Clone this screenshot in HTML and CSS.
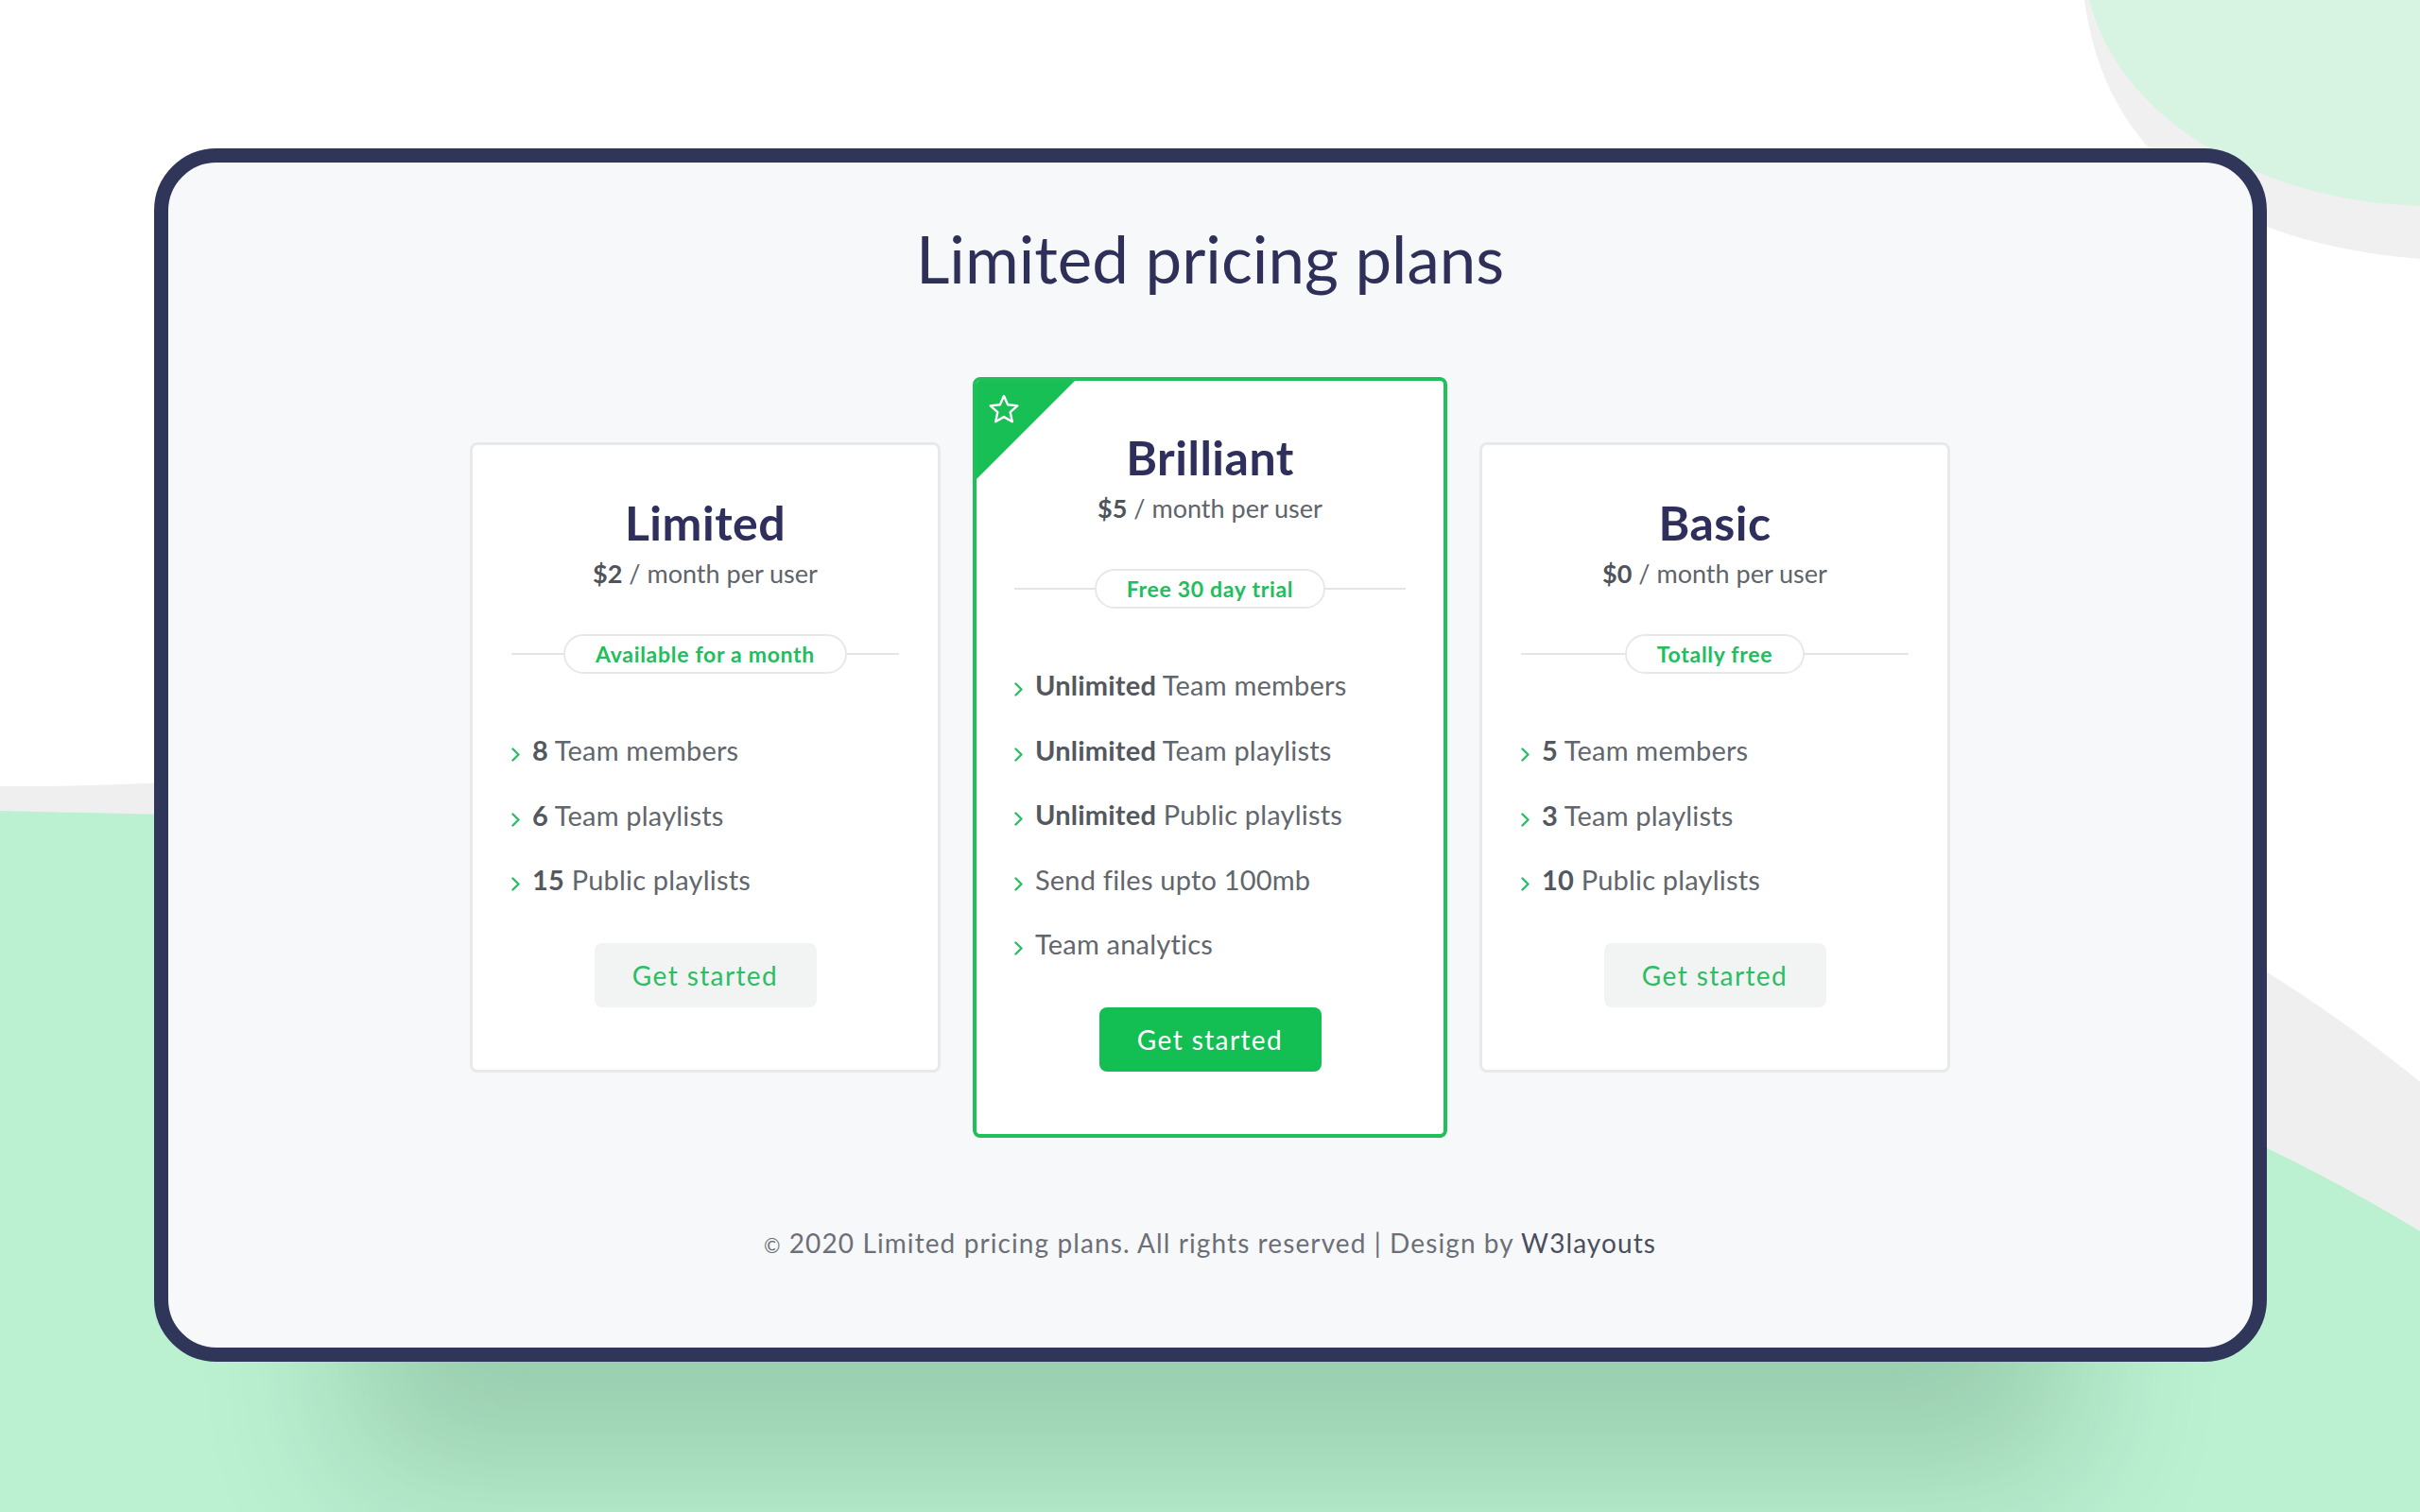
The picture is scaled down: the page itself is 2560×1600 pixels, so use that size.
FILE: index.html
```html
<!DOCTYPE html>
<html lang="en">
<head>
  <meta charset="UTF-8" />
  <meta name="viewport" content="width=device-width, initial-scale=1" />
  <title>Limited pricing plans</title>
  <link rel="stylesheet" href="styles.css">
</head>
<body>

  <!-- background blobs -->
  <svg class="decor" viewBox="0 0 2560 1600" preserveAspectRatio="none" aria-hidden="true">
    <path d="M2205 0 C2225 150 2330 255 2560 274 L2560 0 Z" fill="#f0f0f0" />
    <path d="M2210 0 C2240 120 2380 212 2560 218 L2560 0 Z" fill="#d7f4e3" />
    <path d="M0 832 C700 838 1800 520 2560 1145 L2560 1600 L0 1600 Z" fill="#efefef" />
    <path d="M0 858 C700 875 1850 870 2560 1303 L2560 1600 L0 1600 Z" fill="#bbf0d1" />
  </svg>

  <main class="frame">
    <h1 class="page-title">Limited pricing plans</h1>

    <section class="plans">
      <article class="plan">
        <h3 class="plan-name">Limited</h3>
        <p class="plan-price"><b>$2</b> / month per user</p>
        <div class="plan-tag"><span>Available for a month</span></div>
        <ul class="plan-features">
          <li><svg class="chev" viewBox="0 0 10 15"><path d="M1.5 1.5l6 6-6 6" /></svg><b>8</b> Team members</li>
          <li><svg class="chev" viewBox="0 0 10 15"><path d="M1.5 1.5l6 6-6 6" /></svg><b>6</b> Team playlists</li>
          <li><svg class="chev" viewBox="0 0 10 15"><path d="M1.5 1.5l6 6-6 6" /></svg><b>15</b> Public playlists</li>
        </ul>
        <a class="plan-btn" href="#">Get started</a>
      </article>

      <article class="plan plan-featured">
        <svg class="corner" viewBox="0 0 104 104" aria-hidden="true">
          <polygon points="0,0 104,0 0,104" fill="#17bf55" />
          <path d="M29 16 L33.1 25.3 L43.3 26.4 L35.7 33.2 L37.8 43.2 L29 38.1 L20.2 43.2 L22.3 33.2 L14.7 26.4 L24.9 25.3 Z" fill="none" stroke="#fff" stroke-width="2.4" stroke-linejoin="round" />
        </svg>
        <h3 class="plan-name">Brilliant</h3>
        <p class="plan-price"><b>$5</b> / month per user</p>
        <div class="plan-tag"><span>Free 30 day trial</span></div>
        <ul class="plan-features">
          <li><svg class="chev" viewBox="0 0 10 15"><path d="M1.5 1.5l6 6-6 6" /></svg><b>Unlimited</b> Team members</li>
          <li><svg class="chev" viewBox="0 0 10 15"><path d="M1.5 1.5l6 6-6 6" /></svg><b>Unlimited</b> Team playlists</li>
          <li><svg class="chev" viewBox="0 0 10 15"><path d="M1.5 1.5l6 6-6 6" /></svg><b>Unlimited</b> Public playlists</li>
          <li><svg class="chev" viewBox="0 0 10 15"><path d="M1.5 1.5l6 6-6 6" /></svg>Send files upto 100mb</li>
          <li><svg class="chev" viewBox="0 0 10 15"><path d="M1.5 1.5l6 6-6 6" /></svg>Team analytics</li>
        </ul>
        <a class="plan-btn plan-btn-primary" href="#">Get started</a>
      </article>

      <article class="plan">
        <h3 class="plan-name">Basic</h3>
        <p class="plan-price"><b>$0</b> / month per user</p>
        <div class="plan-tag"><span>Totally free</span></div>
        <ul class="plan-features">
          <li><svg class="chev" viewBox="0 0 10 15"><path d="M1.5 1.5l6 6-6 6" /></svg><b>5</b> Team members</li>
          <li><svg class="chev" viewBox="0 0 10 15"><path d="M1.5 1.5l6 6-6 6" /></svg><b>3</b> Team playlists</li>
          <li><svg class="chev" viewBox="0 0 10 15"><path d="M1.5 1.5l6 6-6 6" /></svg><b>10</b> Public playlists</li>
        </ul>
        <a class="plan-btn" href="#">Get started</a>
      </article>
    </section>

    <footer class="copyright">
      <span class="copy-sign">©</span> 2020 Limited pricing plans. All rights reserved | Design by <a href="#">W3layouts</a>
    </footer>
  </main>

</body>
</html>
```

FILE: styles.css
```css
* {
  box-sizing: border-box;
}

body {
  font-family: 'Lato', 'Noto Sans', sans-serif;
  background: #ffffff;
  margin: 0;
  padding: 0;
  height: 1600px;
  overflow: hidden;
  position: relative;
}

.decor {
  position: absolute;
  top: 0;
  left: 0;
  width: 100%;
  height: 100%;
  z-index: 0;
}

.frame {
  position: relative;
  z-index: 1;
  width: 2235px;
  height: 1284px;
  margin: 157px auto 0;
  border: 15px solid #2f3659;
  border-radius: 66px;
  background: #f7f8fa;
  display: flex;
  flex-direction: column;
  align-items: center;
  box-shadow: 0 330px 150px -210px rgba(20, 70, 40, 0.2);
}

.page-title {
  margin: 61px 0 0;
  font-size: 69px;
  font-weight: 400;
  line-height: 1.2;
  color: #2e3059;
}

.plans {
  margin-top: 83px;
  display: flex;
  align-items: center;
  gap: 34px;
}

.plan {
  position: relative;
  width: 498px;
  padding: 54px 41px 66px;
  background: #ffffff;
  border: 3px solid #e8e9eb;
  border-radius: 8px;
  text-align: center;
  overflow: hidden;
}

.plan-featured {
  width: 502px;
  padding: 53px 40px 66px;
  border: 4px solid #1fbf5a;
}

.corner {
  position: absolute;
  top: 0;
  left: 0;
  width: 104px;
  height: 104px;
}

.plan-name {
  margin: 0;
  font-size: 50px;
  font-weight: 700;
  letter-spacing: 0.5px;
  line-height: 1.15;
  color: #2e2f5d;
}

.plan-price {
  margin: 6px 0 0;
  font-size: 27px;
  line-height: 1.4;
  color: #60646b;
}

.plan-price b {
  color: #4f535a;
}

.plan-tag {
  margin-top: 45px;
  display: flex;
  align-items: center;
}

.plan-tag::before,
.plan-tag::after {
  content: "";
  flex: 1;
  height: 2px;
  background: #e4e5e7;
}

.plan-tag span {
  height: 42px;
  padding: 0 32px;
  border: 2px solid #e7e8ea;
  border-radius: 30px;
  background: #ffffff;
  font-size: 23px;
  font-weight: 700;
  letter-spacing: 0.7px;
  line-height: 38px;
  color: #22bd5c;
}

.plan-features {
  list-style: none;
  margin: 47px 0 0;
  padding: 0;
  text-align: left;
}

.plan-features li {
  font-size: 29px;
  letter-spacing: 0.2px;
  line-height: 68.5px;
  color: #62666d;
  white-space: nowrap;
}

.plan-features b {
  color: #53575e;
}

.chev {
  width: 10px;
  height: 15px;
  margin-right: 12px;
  vertical-align: -1px;
  fill: none;
  stroke: #2dbd66;
  stroke-width: 2.4;
  stroke-linecap: round;
  stroke-linejoin: round;
}

.plan-btn {
  display: block;
  width: 235px;
  height: 68px;
  margin: 32px auto 0;
  border-radius: 8px;
  background: #f2f3f3;
  color: #2dbd62;
  font-size: 28px;
  letter-spacing: 1.4px;
  line-height: 68px;
  text-decoration: none;
}

.plan-btn-primary {
  background: #13bf53;
  color: #ffffff;
}

.copyright {
  margin-top: 95px;
  font-size: 28px;
  letter-spacing: 1.1px;
  line-height: 1.2;
  color: #6c6f77;
}

.copy-sign {
  font-size: 21px;
}

.copyright a {
  color: #4b4e5c;
  text-decoration: none;
}
```
